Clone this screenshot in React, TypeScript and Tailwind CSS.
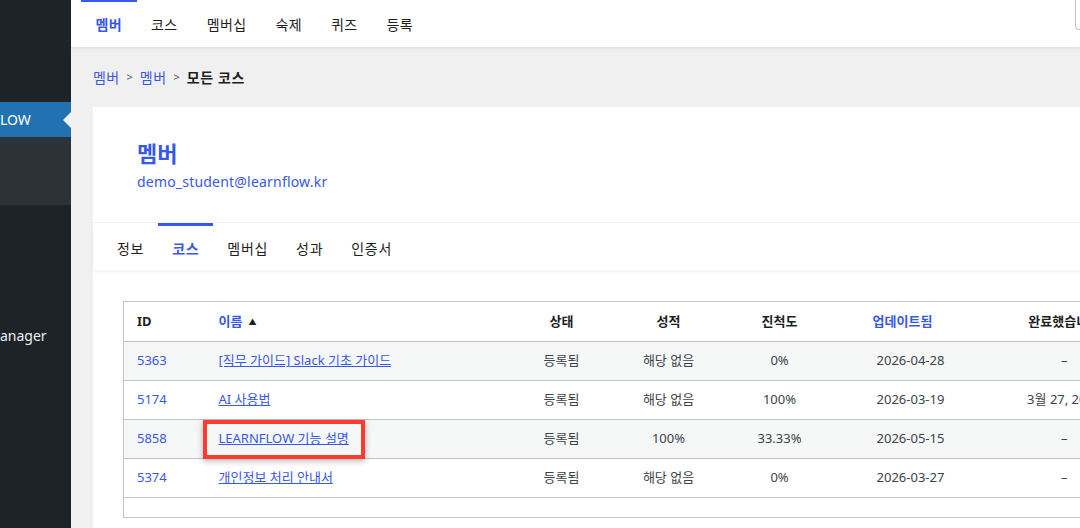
import React from "react";

const BLUE = "text-[#3858e9]";

const topTabs = ["멤버", "코스", "멤버십", "숙제", "퀴즈", "등록"];
const memberTabs = ["정보", "코스", "멤버십", "성과", "인증서"];

type Row = {
  id: string;
  name: string;
  status: string;
  grade: string;
  progress: string;
  updated: string;
  completed: string;
  highlight?: boolean;
};

const rows: Row[] = [
  { id: "5363", name: "[직무 가이드] Slack 기초 가이드", status: "등록됨", grade: "해당 없음", progress: "0%", updated: "2026-04-28", completed: "–" },
  { id: "5174", name: "AI 사용법", status: "등록됨", grade: "해당 없음", progress: "100%", updated: "2026-03-19", completed: "3월 27, 2026" },
  { id: "5858", name: "LEARNFLOW 기능 설명", status: "등록됨", grade: "100%", progress: "33.33%", updated: "2026-05-15", completed: "–", highlight: true },
  { id: "5374", name: "개인정보 처리 안내서", status: "등록됨", grade: "해당 없음", progress: "0%", updated: "2026-03-27", completed: "–" },
];

export default function App() {
  return (
    <div className="flex h-[528px] w-[1080px] overflow-hidden bg-[#f0f0f0] font-['Noto_Sans','Noto_Sans_CJK_KR',sans-serif] text-[#1e1e1e]">
      <Sidebar />
      <div className="min-w-0 flex-1 overflow-hidden">
        <TopNav />
        <div className="pl-[22px]">
          {/* breadcrumb */}
          <div className="mt-[20px] flex h-[20px] items-center gap-[7px] text-[14px]">
            <span className={`tracking-[0.4px] ${BLUE}`}>멤버</span>
            <span className="text-[11px] text-[#50575e]">&gt;</span>
            <span className={`tracking-[0.4px] ${BLUE}`}>멤버</span>
            <span className="text-[11px] text-[#50575e]">&gt;</span>
            <span className="font-bold tracking-[0.6px] text-[#1e1e1e]">모든 코스</span>
          </div>
          <MemberCard />
        </div>
      </div>
    </div>
  );
}

function Sidebar() {
  return (
    <div className="flex w-[71px] shrink-0 flex-col overflow-hidden whitespace-nowrap bg-[#1d2327] text-[14px]">
      <div className="h-[102px]" />
      <div className="relative flex h-[35px] items-center bg-[#2271b1] text-white">
        <span>LOW</span>
        <span className="absolute right-0 top-1/2 h-0 w-0 -translate-y-1/2 border-y-[8px] border-r-[8px] border-y-transparent border-r-[#f0f0f0]" />
      </div>
      <div className="h-[68px] bg-[#2c3338]" />
      <div className="mt-[120px] text-[#f0f0f1]">anager</div>
    </div>
  );
}

function TopNav() {
  return (
    <div className="relative flex h-[47px] items-stretch bg-white pl-[10px] shadow-[0_1px_3px_rgba(0,0,0,0.1)]">
      {topTabs.map((t, i) => (
        <div
          key={t}
          className={`flex items-center border-t-2 px-[14.5px] text-[14px] tracking-[0.4px] ${
            i === 0 ? "border-[#3858e9] font-bold text-[#3858e9]" : "border-transparent text-[#1e1e1e]"
          }`}
        >
          {t}
        </div>
      ))}
      <div className="absolute right-[-20px] top-0 h-[30px] w-[25px] rounded-bl-[4px] border-b border-l border-[#c3c4c7]" />
    </div>
  );
}

function MemberCard() {
  return (
    <div className="mt-[20px] w-[1100px] bg-white pb-[40px]">
      <div className="pb-[30px] pl-[44px] pt-[32px]">
        <h1 className={`text-[22px] font-bold leading-[28px] ${BLUE}`}>멤버</h1>
        <p className={`mt-[5px] text-[14px] leading-[20px] tracking-[0.2px] ${BLUE}`}>demo_student@learnflow.kr</p>
      </div>
      <div className="flex h-[48px] border-t border-[#f3f3f3] pl-[10px] shadow-[0_2px_3px_rgba(0,0,0,0.06)]">
        {memberTabs.map((t, i) => (
          <div
            key={t}
            className={`flex items-center border-t-[3px] px-[14px] text-[14px] tracking-[0.7px] ${
              i === 1 ? "border-[#3858e9] font-bold text-[#3858e9]" : "border-transparent text-[#1e1e1e]"
            }`}
          >
            {t}
          </div>
        ))}
      </div>
      <div className="ml-[30px] mt-[31px]">
        <CourseTable />
      </div>
    </div>
  );
}

function CourseTable() {
  return (
    <table className="w-[1019px] table-fixed border-collapse border border-[#c3c4c7] text-[13px]">
      <colgroup>
        <col className="w-[82px]" />
        <col className="w-[305px]" />
        <col className="w-[102px]" />
        <col className="w-[112px]" />
        <col className="w-[110px]" />
        <col className="w-[152px]" />
        <col className="w-[156px]" />
      </colgroup>
      <thead>
        <tr className="h-[40px] border-b border-[#c3c4c7] font-bold text-[#1e1e1e]">
          <th className="px-[13px] text-left">ID</th>
          <th className="px-[13px] text-left">
            <span className={BLUE}>이름</span>
            <span className="ml-[6px] align-[1px] text-[8px] text-[#1e1e1e]">▲</span>
          </th>
          <th>상태</th>
          <th>성적</th>
          <th>진척도</th>
          <th className={`pr-[16px] ${BLUE}`}>업데이트됨</th>
          <th className="whitespace-nowrap">완료했습니다</th>
        </tr>
      </thead>
      <tbody>
        {rows.map((r, i) => (
          <tr key={r.id} className={`h-[39px] border-b border-[#c3c4c7] ${i % 2 === 0 ? "bg-[#f6f7f7]" : "bg-white"}`}>
            <td className={`px-[13px] ${BLUE}`}>{r.id}</td>
            <td className="px-[13px]">
              <span className="relative inline-block">
                <a href="#" className={`underline ${BLUE}`}>{r.name}</a>
                {r.highlight && (
                  <span className="pointer-events-none absolute -inset-x-[16px] -bottom-[10px] -top-[9px] border-4 border-[#ff3b30] shadow-[0_2px_6px_rgba(0,0,0,0.3)]" />
                )}
              </span>
            </td>
            <td className="text-center text-[#3c434a]">{r.status}</td>
            <td className="text-center text-[#3c434a]">{r.grade}</td>
            <td className="text-center text-[#3c434a]">{r.progress}</td>
            <td className="text-center text-[#3c434a]">{r.updated}</td>
            <td className="whitespace-nowrap text-center text-[#3c434a]">{r.completed}</td>
          </tr>
        ))}
        <tr className="h-[20px]">
          <td colSpan={7} />
        </tr>
      </tbody>
    </table>
  );
}
